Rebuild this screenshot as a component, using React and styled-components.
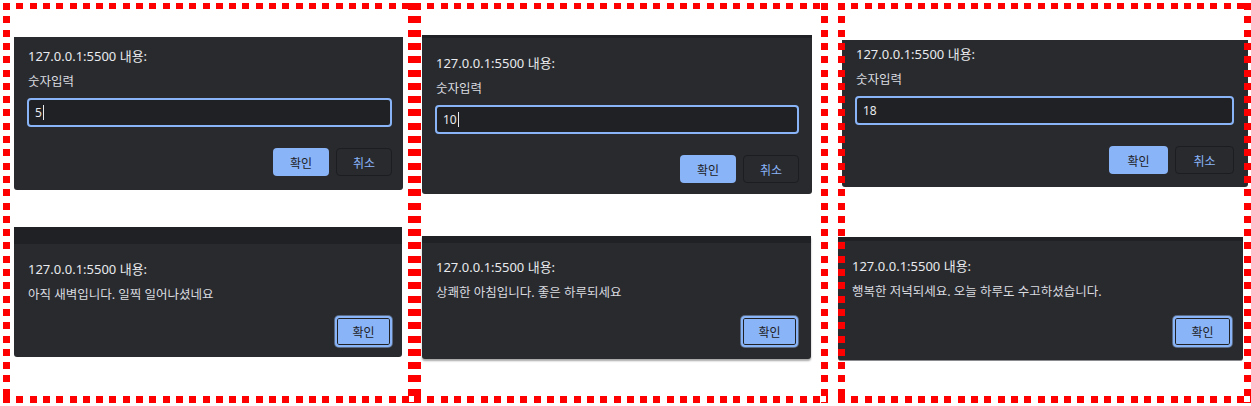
import React from "react";
import styled, { createGlobalStyle } from "styled-components";

const Global = createGlobalStyle`
  html, body { margin: 0; padding: 0; background: #ffffff; }
  body { width: 1251px; height: 406px; overflow: hidden; font-family: "Noto Sans", "Noto Sans CJK KR", sans-serif; }
`;

const Row = styled.div`
  display: flex;
  align-items: flex-start;
  padding: 3px 0 0 3px;
`;

const Panel = styled.div`
  position: relative;
  flex: none;
  width: ${(p) => p.$w}px;
  height: 400px;
  margin-left: ${(p) => p.$ml || 0}px;
  display: flex;
  flex-direction: column;
  align-items: flex-start;
  overflow: hidden;
  &::after {
    content: "";
    position: absolute;
    inset: 0;
    pointer-events: none;
    background:
      repeating-linear-gradient(to right, #ff0000 0 7px, transparent 7px 13.3px) left top / 100% 6px no-repeat,
      repeating-linear-gradient(to right, #ff0000 0 7px, transparent 7px 13.3px) left bottom / 100% 7px no-repeat,
      repeating-linear-gradient(to bottom, #ff0000 0 7px, transparent 7px 13.3px) left top / 7px 100% no-repeat,
      repeating-linear-gradient(to bottom, #ff0000 0 7px, transparent 7px 13.3px) right top / 7px 100% no-repeat;
  }
`;

const Dialog = styled.div`
  flex: none;
  box-sizing: border-box;
  width: ${(p) => p.$w}px;
  margin-left: ${(p) => p.$ml}px;
  margin-top: ${(p) => p.$mt}px;
  background: #292a2d;
  border-top: ${(p) => p.$strip || 0}px solid #202124;
  padding: ${(p) => p.$pt}px ${(p) => p.$pr}px ${(p) => p.$pb}px 14px;
  border-radius: 0 0 3px 3px;
  display: flex;
  flex-direction: column;
  box-shadow: ${(p) => (p.$shadow ? "0 2px 2px rgba(0,0,0,0.35)" : "none")};
  ${(p) => (p.$line ? "border-bottom: 1px solid #8a8b8e;" : "")}
`;

const Title = styled.div`
  font-size: 13px;
  line-height: 20px;
  color: #e8eaed;
  white-space: nowrap;
`;

const Message = styled.div`
  margin-top: 7px;
  font-size: 12.5px;
  line-height: 17px;
  color: #dadce0;
  white-space: nowrap;
`;

const Field = styled.div`
  box-sizing: border-box;
  margin: 8px 0 0 -1px;
  height: 29px;
  border: 2px solid #8ab4f8;
  border-radius: 4px;
  background: #202124;
  padding: 0 6px;
  display: flex;
  align-items: center;
  font-size: 12px;
  color: #e8eaed;
`;

const Caret = styled.span`
  display: inline-block;
  width: 1px;
  height: 15px;
  margin-left: 1px;
  background: #e8eaed;
`;

const Buttons = styled.div`
  display: flex;
  justify-content: flex-end;
  gap: 7px;
  margin-top: ${(p) => p.$mt}px;
`;

const Button = styled.div`
  box-sizing: border-box;
  width: ${(p) => p.$w || 56}px;
  height: ${(p) => p.$h || 28}px;
  border-radius: 4px;
  display: flex;
  align-items: center;
  justify-content: center;
  font-size: 12px;
  font-family: "Noto Sans CJK KR", sans-serif;
  ${(p) =>
    p.$kind === "primary"
      ? "background: #8ab4f8; color: #202124;"
      : p.$kind === "focus"
      ? "background: #8ab4f8; color: #202124; border: 2px solid #8ab4f8; box-shadow: inset 0 0 0 1px #202124, 0 0 0 1px #5a6b85;"
      : "background: transparent; color: #8ab4f8; border: 1px solid #1c1d20;"}
`;

const prompts = [
  { w: 389, ml: 11, mt: 34, pt: 9, pr: 11, pb: 14, strip: 0, value: "5", caret: true, bw: 56 },
  { w: 390, ml: 8, mt: 32, pt: 15, pr: 13, pb: 11, strip: 3, value: "10", caret: true, bw: 56 },
  { w: 406, ml: 4, mt: 37, pt: 4, pr: 14, pb: 13, strip: 0, value: "18", caret: false, bw: 59 },
];

const alerts = [
  { w: 388, ml: 11, mt: 37, strip: 17, pt: 15, pr: 10, pb: 10, bmt: 13, text: "아직 새벽입니다. 일찍 일어나셨네요", bw: 57 },
  { w: 389, ml: 8, mt: 42, strip: 7, pt: 14, pr: 13, pb: 12, bmt: 15, text: "상쾌한 아침입니다. 좋은 하루되세요", bw: 57, shadow: true },
  { w: 405, ml: 0, mt: 50, strip: 4, pt: 15, pr: 11, pb: 13, bmt: 16, text: "행복한 저녁되세요. 오늘 하루도 수고하셨습니다.", bw: 59, line: true },
];

const widths = [412, 414, 413];
const margins = [0, -1, 10];

function Prompt({ p }) {
  return (
    <Dialog $w={p.w} $ml={p.ml} $mt={p.mt} $pt={p.pt} $pr={p.pr} $pb={p.pb} $strip={p.strip}>
      <Title>127.0.0.1:5500 내용:</Title>
      <Message>숫자입력</Message>
      <Field>
        {p.value}
        {p.caret && <Caret />}
      </Field>
      <Buttons $mt={21}>
        <Button $kind="primary" $w={p.bw}>확인</Button>
        <Button $w={p.bw}>취소</Button>
      </Buttons>
    </Dialog>
  );
}

function Alert({ a }) {
  return (
    <Dialog
      $w={a.w}
      $ml={a.ml}
      $mt={a.mt}
      $pt={a.pt}
      $pr={a.pr}
      $pb={a.pb}
      $strip={a.strip}
      $shadow={a.shadow}
      $line={a.line}
    >
      <Title>127.0.0.1:5500 내용:</Title>
      <Message>{a.text}</Message>
      <Buttons $mt={a.bmt}>
        <Button $kind="focus" $w={a.bw} $h={31}>확인</Button>
      </Buttons>
    </Dialog>
  );
}

export default function App() {
  return (
    <>
      <Global />
      <Row>
        {widths.map((w, i) => (
          <Panel key={i} $w={w} $ml={margins[i]}>
            <Prompt p={prompts[i]} />
            <Alert a={alerts[i]} />
          </Panel>
        ))}
      </Row>
    </>
  );
}
